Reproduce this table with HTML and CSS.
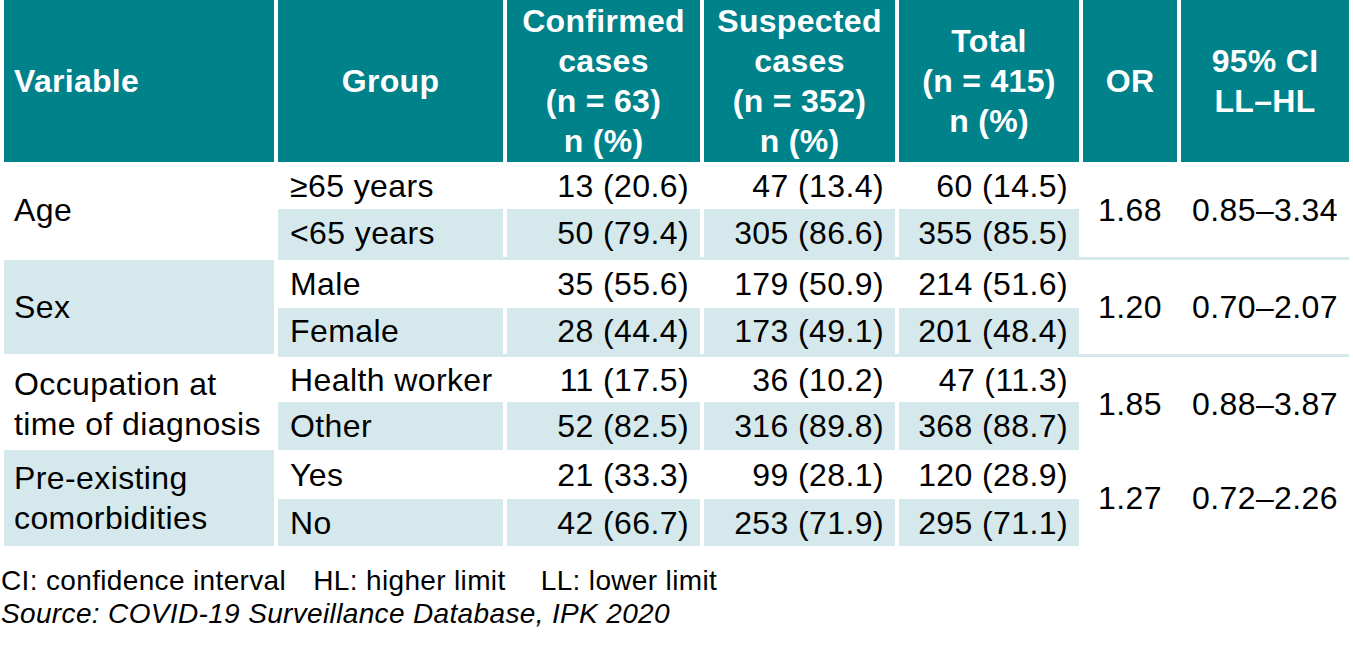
FILE: index.html
```html
<!DOCTYPE html>
<html lang="en">
<head>
<meta charset="utf-8">
<title>COVID-19 cases table</title>
<link rel="stylesheet" href="styles.css">
</head>
<body>
<div class="tbl">
  <div class="hdr">
    <div class="h h-left">Variable</div>
    <div class="h">Group</div>
    <div class="h">Confirmed<br>cases<br>(n = 63)<br>n (%)</div>
    <div class="h">Suspected<br>cases<br>(n = 352)<br>n (%)</div>
    <div class="h">Total<br>(n = 415)<br>n (%)</div>
    <div class="h">OR</div>
    <div class="h">95% CI<br>LL–HL</div>
  </div>

  <div class="r r1">
    <div class="c var span">Age</div>
    <div class="c grp">≥65 years</div>
    <div class="c num">13 (20.6)</div>
    <div class="c num">47 (13.4)</div>
    <div class="c num">60 (14.5)</div>
    <div class="c mid span">1.68</div>
    <div class="c mid span">0.85–3.34</div>
  </div>
  <div class="r r2 band">
    <div class="c grp">&lt;65 years</div>
    <div class="c num">50 (79.4)</div>
    <div class="c num">305 (86.6)</div>
    <div class="c num">355 (85.5)</div>
  </div>
  <div class="sep sep1"></div>

  <div class="r r3">
    <div class="c var span tint">Sex</div>
    <div class="c grp">Male</div>
    <div class="c num">35 (55.6)</div>
    <div class="c num">179 (50.9)</div>
    <div class="c num">214 (51.6)</div>
    <div class="c mid span">1.20</div>
    <div class="c mid span">0.70–2.07</div>
  </div>
  <div class="r r4 band">
    <div class="c grp">Female</div>
    <div class="c num">28 (44.4)</div>
    <div class="c num">173 (49.1)</div>
    <div class="c num">201 (48.4)</div>
  </div>
  <div class="sep sep2"></div>

  <div class="r r5">
    <div class="c var span">Occupation at<br>time of diagnosis</div>
    <div class="c grp">Health worker</div>
    <div class="c num">11 (17.5)</div>
    <div class="c num">36 (10.2)</div>
    <div class="c num">47 (11.3)</div>
    <div class="c mid span">1.85</div>
    <div class="c mid span">0.88–3.87</div>
  </div>
  <div class="r r6 band">
    <div class="c grp">Other</div>
    <div class="c num">52 (82.5)</div>
    <div class="c num">316 (89.8)</div>
    <div class="c num">368 (88.7)</div>
  </div>

  <div class="r r7">
    <div class="c var span tint">Pre-existing<br>comorbidities</div>
    <div class="c grp">Yes</div>
    <div class="c num">21 (33.3)</div>
    <div class="c num">99 (28.1)</div>
    <div class="c num">120 (28.9)</div>
    <div class="c mid span">1.27</div>
    <div class="c mid span">0.72–2.26</div>
  </div>
  <div class="r r8 band">
    <div class="c grp">No</div>
    <div class="c num">42 (66.7)</div>
    <div class="c num">253 (71.9)</div>
    <div class="c num">295 (71.1)</div>
  </div>
</div>

<div class="notes">
  <p class="abbr">CI: confidence interval <span class="gap1">HL: higher limit</span> <span class="gap2">LL: lower limit</span></p>
  <p class="source">Source: COVID-19 Surveillance Database, IPK 2020</p>
</div>
</body>
</html>
```

FILE: styles.css
```css
html, body {
  margin: 0;
  padding: 0;
  background: #ffffff;
}

body {
  font-family: "Liberation Sans", Arial, sans-serif;
  color: #000000;
}

.tbl {
  display: grid;
  grid-template-columns: 270px 225px 193px 191px 180px 94px 168px;
  grid-template-rows: 162px 47px 48px 3px 48px 46px 3px 45px 48px 49px 47px;
  column-gap: 4px;
  margin-left: 4px;
  width: 1345px;
}

.hdr, .r {
  display: contents;
}

.h {
  grid-row: 1;
  background: #00828b;
  color: #ffffff;
  font-weight: bold;
  font-size: 32px;
  line-height: 40px;
  letter-spacing: 0.3px;
  display: flex;
  align-items: center;
  justify-content: center;
  text-align: center;
}

.h-left {
  justify-content: flex-start;
  text-align: left;
  padding-left: 10px;
}

.c {
  font-size: 32px;
  line-height: 40px;
  letter-spacing: 0.4px;
  display: flex;
  align-items: center;
  background: #ffffff;
  white-space: nowrap;
}

.band > .c,
.c.tint {
  background: #d5e9ec;
}

.var {
  padding-left: 10px;
}

.grp {
  padding-left: 12px;
}

.num {
  justify-content: flex-end;
  padding-right: 11px;
}

.mid {
  justify-content: center;
}

.r1 > * { grid-row: 2; }
.r1 > .span { grid-row: 2 / span 2; }
.r2 > * { grid-row: 3; }

.r3 > * { grid-row: 5; }
.r3 > .span { grid-row: 5 / span 2; }
.r4 > * { grid-row: 6; }

.r5 > * { grid-row: 8; }
.r5 > .span { grid-row: 8 / span 2; }
.r6 > * { grid-row: 9; }

.r7 > * { grid-row: 10; }
.r7 > .span { grid-row: 10 / span 2; }
.r8 > * { grid-row: 11; }

.sep {
  grid-column: 2 / -1;
  background: #d5e9ec;
}

.sep1 { grid-row: 4; }
.sep2 { grid-row: 7; }

.notes {
  margin-top: 18px;
  padding-left: 1px;
  font-size: 28px;
  line-height: 33px;
  letter-spacing: 0.35px;
}

.notes p {
  margin: 0;
  white-space: nowrap;
}

.gap1 {
  margin-left: 19px;
}

.gap2 {
  margin-left: 27px;
}

.source {
  font-style: italic;
}
```
